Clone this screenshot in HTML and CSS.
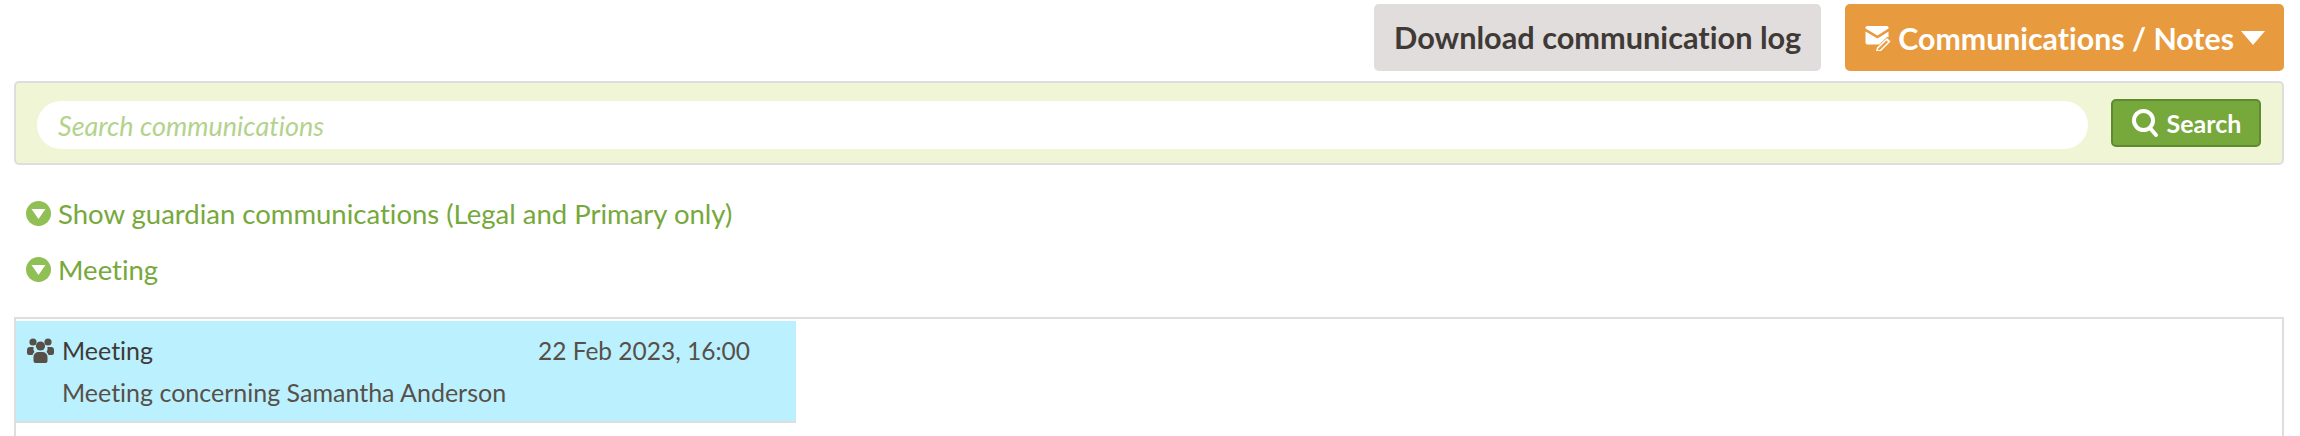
FILE: index.html
```html
<!DOCTYPE html>
<html>

<head>
    <title>communications</title>
    <link rel="stylesheet" href="styles.css">
</head>

<body>
    <div class="actions">
        <a class="btn btn-grey">Download communication log</a>
        <a class="btn btn-orange">
            <svg class="icon-mail" viewBox="0 0 26 26" width="26" height="26">
                <path fill="#fff" d="M2 1h20a1.500 1.500 0 0 1 1.500 1.500v1L12.500 10.500 .5 3.500v-1A1.500 1.500 0 0 1 2 1z" />
                <path fill="#fff" d="M.5 6.500l12 7 11-7v5.500L16 19.500H2.500a2 2 0 0 1-2-2z" />
                <path d="M25 14.500l-11 11" stroke="#e89a3e" stroke-width="8" />
                <path fill="#fff" d="M22 13l3.500 3.500-9.500 9.500-5.500 1.500 1.500-5z" />
                <path fill="#e89a3e" d="M21.500 15.500l1.500 1.500-7.800 7.800-2.300.6.600-2.100z" />
            </svg>
            Communications / Notes
            <svg class="icon-caret" viewBox="0 0 24 14" width="24" height="14">
                <path fill="#fff" d="M0 0h24L12 14z" />
            </svg>
        </a>
    </div>

    <form class="search-panel">
        <input class="search-input" type="text" placeholder="Search communications">
        <button class="search-btn" type="button">
            <svg viewBox="0 0 28 30" width="28" height="30">
                <circle cx="12.500" cy="12.500" r="9.500" fill="none" stroke="#fff" stroke-width="4" />
                <path d="M19 20l6 7" stroke="#fff" stroke-width="4" stroke-linecap="round" />
            </svg>
            Search
        </button>
    </form>

    <div class="toggles">
        <a class="toggle">
            <svg viewBox="0 0 25 25" width="25" height="25">
                <circle cx="12.500" cy="12.500" r="12.500" fill="#8fbf55" />
                <path fill="#fff" d="M5.500 8h14l-7 10z" />
            </svg>
            Show guardian communications (Legal and Primary only)
        </a>
        <a class="toggle">
            <svg viewBox="0 0 25 25" width="25" height="25">
                <circle cx="12.500" cy="12.500" r="12.500" fill="#8fbf55" />
                <path fill="#fff" d="M5.500 8h14l-7 10z" />
            </svg>
            Meeting
        </a>
    </div>

    <div class="log">
        <div class="entry">
            <div class="entry-head">
                <span class="entry-type">
                    <svg viewBox="0 0 27 26" width="27" height="26">
                        <g fill="#575049">
                            <circle cx="6" cy="5" r="3.600" />
                            <circle cx="21" cy="5" r="3.600" />
                            <circle cx="13.500" cy="9" r="4.600" />
                            <path d="M0 13a3 3 0 0 1 3-3h3.500a7 7 0 0 0 1 5 6 6 0 0 0-2 3H2a2 2 0 0 1-2-2z" />
                            <path d="M27 13a3 3 0 0 0-3-3h-3.500a7 7 0 0 1-1 5 6 6 0 0 1 2 3H25a2 2 0 0 0 2-2z" />
                            <path d="M6.500 20a5 5 0 0 1 5-5h4a5 5 0 0 1 5 5v4a2 2 0 0 1-2 2h-10a2 2 0 0 1-2-2z" />
                        </g>
                    </svg>
                    Meeting
                </span>
                <span class="entry-date">22 Feb 2023, 16:00</span>
            </div>
            <p class="entry-text">Meeting concerning Samantha Anderson</p>
        </div>
    </div>
</body>

</html>
```

FILE: styles.css
```css
html,
body {
    height: 100%;
    overflow: hidden;
}

body {
    margin: 0;
    padding: 4px 16px 0 14px;
    box-sizing: border-box;
    font-family: "Lato", "Noto Sans", sans-serif;
    font-size: 25px;
    font-variant-ligatures: none;
    color: #575049;
    background: #fff;
}

.actions {
    display: flex;
    justify-content: flex-end;
    gap: 24px;
}

.btn {
    display: flex;
    align-items: center;
    height: 67px;
    border-radius: 5px;
    font-weight: 700;
}

.btn-grey {
    padding: 0 20px;
    background: #e0dddc;
    color: #3f3a36;
    font-size: 30.700px;
}

.btn-orange {
    padding: 0 19px 0 20px;
    background: #e89a3e;
    color: #fff;
    gap: 7px;
    font-size: 30.300px;
}

.search-panel {
    display: flex;
    align-items: center;
    justify-content: space-between;
    margin-top: 10px;
    height: 84px;
    box-sizing: border-box;
    padding: 0 21px;
    background: #f0f5d6;
    border: 2px solid #dedede;
    border-radius: 5px;
}

.search-input {
    width: 2051px;
    height: 48px;
    box-sizing: border-box;
    margin-top: 4px;
    padding: 0 21px;
    border: 0;
    border-radius: 24px;
    background: #fff;
    font-family: inherit;
    font-size: 27px;
    font-style: italic;
    font-variant-ligatures: none;
}

.search-input::placeholder {
    color: #b3d38d;
    opacity: 1;
}

.search-btn {
    display: flex;
    align-items: center;
    justify-content: center;
    gap: 8px;
    width: 150px;
    height: 48px;
    padding: 0;
    background: #76a83c;
    border: 2px solid #5f8a2f;
    border-radius: 5px;
    color: #fff;
    font-family: inherit;
    font-size: 25px;
    font-weight: 700;
}

.toggles {
    display: flex;
    flex-direction: column;
    gap: 31px;
    margin-top: 36px;
    padding-left: 12px;
    font-size: 27.500px;
}

.toggle {
    display: flex;
    align-items: center;
    gap: 7px;
    height: 25px;
    color: #76a83c;
}

.log {
    box-sizing: border-box;
    margin-top: 35px;
    height: 119px;
    border: 2px solid #dedede;
    border-bottom: 0;
}

.entry {
    width: 780px;
    height: 102px;
    box-sizing: border-box;
    margin-top: 2px;
    padding: 14px 46px 0 11px;
    background: #bbf0ff;
    border-bottom: 2px solid #dedede;
}

.entry-head {
    display: flex;
    justify-content: space-between;
    align-items: center;
}

.entry-type {
    display: flex;
    align-items: center;
    gap: 8px;
    color: #3f3a36;
}

.entry-date {
    font-size: 24.500px;
}

.entry-text {
    margin: 12px 0 0 35px;
}
```
